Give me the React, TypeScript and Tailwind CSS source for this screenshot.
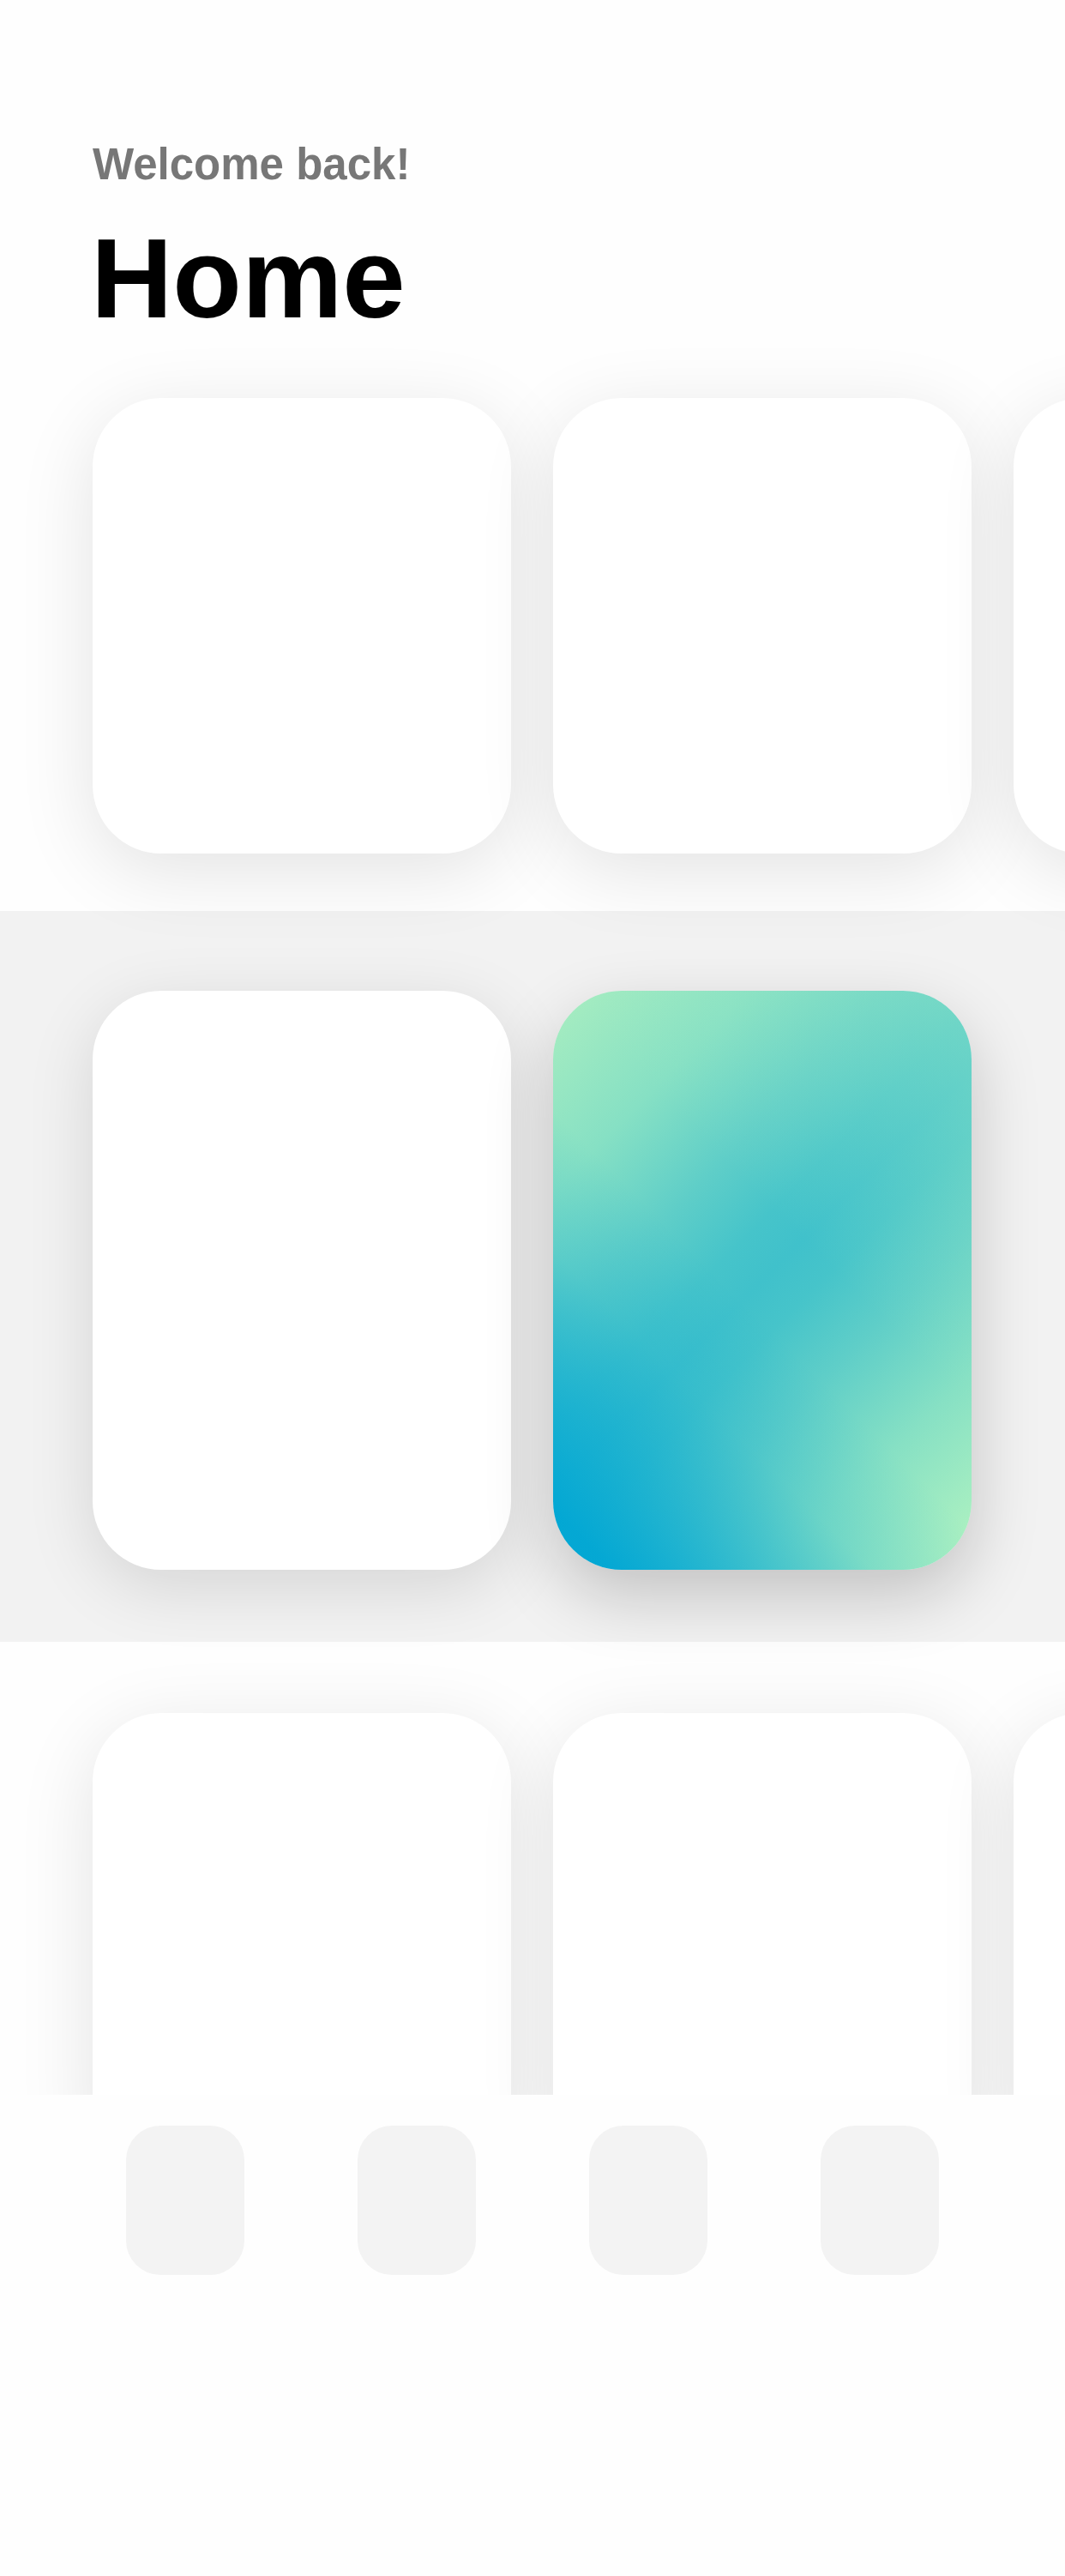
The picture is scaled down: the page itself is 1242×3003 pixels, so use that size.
const GradientCard = () => (
  <div className="w-[488px] h-[675px] shrink-0 rounded-[80px] shadow-[0_30px_80px_rgba(0,0,0,0.2)] bg-[image:linear-gradient(45deg,rgba(0,166,212,0.95)_6%,rgba(0,166,212,0.55)_20%,rgba(0,166,212,0.2)_32%,rgba(0,166,212,0)_46%,rgba(160,235,195,0)_58%,rgba(160,235,195,0.5)_100%),linear-gradient(135deg,#aaeec0_0%,#86e0c4_20%,#5fcec8_34%,#46c4ca_44%,#40c1cb_50%,#46c4ca_56%,#5fcec8_66%,#86e0c4_80%,#b4f4c0_100%)]" />
);

const WhiteCard = ({ tall = false }: { tall?: boolean }) => (
  <div
    className={
      tall
        ? "w-[488px] h-[675px] shrink-0 rounded-[80px] bg-white shadow-[0_20px_80px_rgba(0,0,0,0.12)]"
        : "w-[488px] h-[531px] shrink-0 rounded-[80px] bg-white shadow-[0_20px_90px_rgba(0,0,0,0.11)]"
    }
  />
);

const TabButton = () => (
  <div className="w-[138px] h-[174px] rounded-[40px] bg-[#f3f3f3] justify-self-center" />
);

export default function App() {
  return (
    <div className="w-[1242px] min-h-[3003px] bg-[#fefefe] overflow-hidden font-['Liberation_Sans',Arial,sans-serif]">
      <header className="pt-[166px] pl-[108px]">
        <p className="text-[51px] leading-none font-bold text-[#777777]">Welcome back!</p>
        <h1 className="mt-[42px] -ml-[2px] text-[132px] leading-none font-bold text-black">Home</h1>
      </header>

      <section className="mt-[73px] flex gap-[49px] pl-[108px]">
        <WhiteCard />
        <WhiteCard />
        <WhiteCard />
      </section>

      <section className="mt-[67px] bg-[#f2f2f2] pt-[93px] pb-[84px] flex gap-[49px] pl-[108px]">
        <WhiteCard tall />
        <GradientCard />
      </section>

      <section className="h-[528px] overflow-hidden pt-[83px]">
        <div className="flex gap-[49px] pl-[108px]">
          <WhiteCard />
          <WhiteCard />
          <WhiteCard />
        </div>
      </section>

      <nav className="h-[561px] bg-[#fefefe] grid grid-cols-4 items-start px-[81px] pt-[36px]">
        <TabButton />
        <TabButton />
        <TabButton />
        <TabButton />
      </nav>
    </div>
  );
}
